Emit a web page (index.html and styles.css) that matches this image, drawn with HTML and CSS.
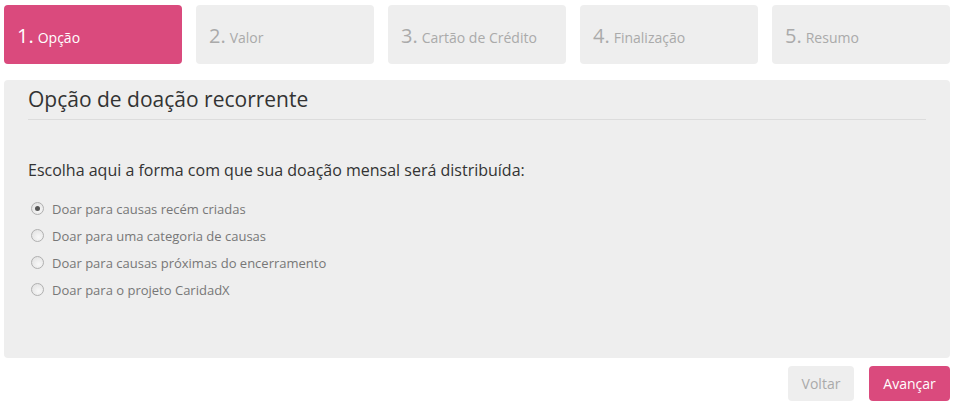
FILE: index.html
```html
<!DOCTYPE html>
<html lang="pt">
<head>
<meta charset="utf-8">
<title>Doação recorrente</title>
<link rel="stylesheet" href="styles.css">
</head>
<body>
<div class="page">
  <ol class="steps">
    <li class="step active"><span class="num">1.</span><span class="lbl">Opção</span></li>
    <li class="step"><span class="num">2.</span><span class="lbl">Valor</span></li>
    <li class="step"><span class="num">3.</span><span class="lbl">Cartão de Crédito</span></li>
    <li class="step"><span class="num">4.</span><span class="lbl">Finalização</span></li>
    <li class="step"><span class="num">5.</span><span class="lbl">Resumo</span></li>
  </ol>
  <section class="panel">
    <h2 class="title">Opção de doação recorrente</h2>
    <p class="desc">Escolha aqui a forma com que sua doação mensal será distribuída:</p>
    <ul class="options">
      <li class="opt"><span class="radio checked"></span>Doar para causas recém criadas</li>
      <li class="opt"><span class="radio"></span>Doar para uma categoria de causas</li>
      <li class="opt"><span class="radio"></span>Doar para causas próximas do encerramento</li>
      <li class="opt"><span class="radio"></span>Doar para o projeto CaridadX</li>
    </ul>
  </section>
  <div class="actions">
    <button class="btn btn-back">Voltar</button>
    <button class="btn btn-next">Avançar</button>
  </div>
</div>
</body>
</html>
```
FILE: styles.css
```css
* { box-sizing: border-box; }
body {
  margin: 0;
  font-family: "Open Sans", "Noto Sans", sans-serif;
  background: #fff;
}
.page {
  padding: 5px 5px 0 4px;
}
.steps {
  list-style: none;
  margin: 0;
  padding: 0;
  display: flex;
  gap: 14px;
}
.step {
  flex: 1;
  height: 59px;
  border-radius: 4px;
  background: #eeeeee;
  color: #aaaaaa;
  display: flex;
  align-items: center;
  padding-left: 13px;
  padding-top: 2px;
}
.step.active {
  background: #da4a7d;
  color: #fff;
}
.num {
  font-size: 20px;
  margin-right: 4px;
}
.lbl {
  font-size: 14px;
  padding-top: 3px;
}
.panel {
  margin-top: 16px;
  height: 278px;
  background: #eeeeee;
  border-radius: 4px;
  padding: 5px 24px 0 24px;
}
.title {
  margin: 0;
  font-size: 21px;
  font-weight: 400;
  line-height: 28px;
  color: #333;
  padding-bottom: 6px;
  border-bottom: 1px solid #dcdcdc;
}
.desc {
  margin: 39px 0 0 0;
  font-size: 16px;
  line-height: 22px;
  color: #333;
}
.options {
  list-style: none;
  margin: 14px 0 0 0;
  padding: 0 0 0 3px;
}
.opt {
  display: flex;
  align-items: center;
  height: 27px;
  font-size: 13px;
  color: #777;
}
.radio {
  width: 13px;
  height: 13px;
  border-radius: 50%;
  border: 1px solid #b0b0b0;
  background: radial-gradient(circle at 60% 65%, #f8f8f8 0%, #dedede 100%);
  margin-right: 8px;
  display: flex;
  align-items: center;
  justify-content: center;
  margin-top: -1px;
}
.radio.checked::after {
  content: "";
  width: 5px;
  height: 5px;
  border-radius: 50%;
  background: #555;
}
.actions {
  display: flex;
  justify-content: flex-end;
  gap: 15px;
  margin-top: 8px;
}
.btn {
  height: 35px;
  border: none;
  border-radius: 4px;
  font-family: "Open Sans", "Noto Sans", sans-serif;
  font-size: 14px;
  padding: 0;
}
.btn-back {
  width: 66px;
  background: #eeeeee;
  color: #aaaaaa;
}
.btn-next {
  width: 81px;
  background: #da4a7d;
  color: #fff;
}
```
